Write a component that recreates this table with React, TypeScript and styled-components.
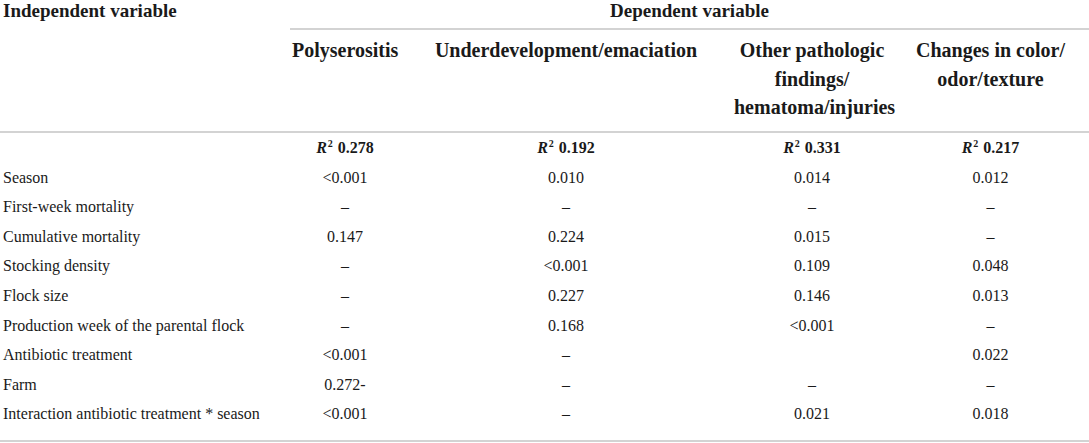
import * as React from 'react'
import styled, { createGlobalStyle } from 'styled-components'

const GlobalStyle = createGlobalStyle`
  html, body {
    margin: 0;
    padding: 0;
    background: #ffffff;
  }

  body {
    font-family: "Liberation Serif", "Times New Roman", Times, serif;
    color: #1a1a1a;
  }
`

const StyledTable = styled.div`
  width: 1089px;
  display: grid;
  grid-template-columns: 290px 110px 332px 160px 1fr;
  font-family: "Liberation Serif", "Times New Roman", Times, serif;
`

const StyledTitleCell = styled.div<{ $span?: number; $rule?: boolean }>`
  grid-column: span ${({ $span }) => $span ?? 1};
  height: 28px;
  line-height: 22px;
  font-size: 19px;
  font-weight: 700;
  padding-left: ${({ $rule }) => ($rule ? '0' : '3px')};
  text-align: ${({ $rule }) => ($rule ? 'center' : 'left')};
  border-bottom: 2px solid ${({ $rule }) => ($rule ? '#d3d3d3' : 'transparent')};
`

const StyledHeadCell = styled.div`
  padding: 6px 2px 9px;
  height: 86px;
  line-height: 28.5px;
  font-size: 20px;
  font-weight: 700;
  text-align: center;
  border-bottom: 2px solid #d3d3d3;
`

const StyledCell = styled.div<{ $first?: boolean; $last?: boolean }>`
  height: 29.6px;
  line-height: 29.6px;
  font-size: 16px;
  white-space: nowrap;
  text-align: ${({ $first }) => ($first ? 'left' : 'center')};
  padding-left: ${({ $first }) => ($first ? '3px' : '0')};
  padding-bottom: ${({ $last }) => ($last ? '11px' : '0')};
  border-bottom: ${({ $last }) => ($last ? '2px solid #d3d3d3' : 'none')};
`

const StyledStat = styled.span`
  font-weight: 700;

  i {
    font-style: italic;
  }

  sup {
    font-size: 10px;
    line-height: 0;
    vertical-align: 6px;
    margin-left: 1px;
    margin-right: 1px;
  }
`

const headers = [
  'Polyserositis',
  'Underdevelopment/emaciation',
  'Other pathologic findings/ hematoma/injuries',
  'Changes in color/ odor/texture',
]

const stats = ['0.278', '0.192', '0.331', '0.217']

const rows: string[][] = [
  ['Season', '<0.001', '0.010', '0.014', '0.012'],
  ['First-week mortality', '–', '–', '–', '–'],
  ['Cumulative mortality', '0.147', '0.224', '0.015', '–'],
  ['Stocking density', '–', '<0.001', '0.109', '0.048'],
  ['Flock size', '–', '0.227', '0.146', '0.013'],
  ['Production week of the parental flock', '–', '0.168', '<0.001', '–'],
  ['Antibiotic treatment', '<0.001', '–', '', '0.022'],
  ['Farm', '0.272-', '–', '–', '–'],
  ['Interaction antibiotic treatment * season', '<0.001', '–', '0.021', '0.018'],
]

const App = () => {
  return (
    <>
      <GlobalStyle />
      <StyledTable>
        <StyledTitleCell>Independent variable</StyledTitleCell>
        <StyledTitleCell $span={4} $rule>
          Dependent variable
        </StyledTitleCell>

        <StyledHeadCell />
        {headers.map((h) => (
          <StyledHeadCell key={h}>{h}</StyledHeadCell>
        ))}

        <StyledCell $first />
        {stats.map((s) => (
          <StyledCell key={s}>
            <StyledStat>
              <i>R</i>
              <sup>2</sup> {s}
            </StyledStat>
          </StyledCell>
        ))}

        {rows.map((row, r) =>
          row.map((value, c) => (
            <StyledCell
              key={`${r}-${c}`}
              $first={c === 0}
              $last={r === rows.length - 1}
            >
              {value}
            </StyledCell>
          ))
        )}
      </StyledTable>
    </>
  )
}

export default App
